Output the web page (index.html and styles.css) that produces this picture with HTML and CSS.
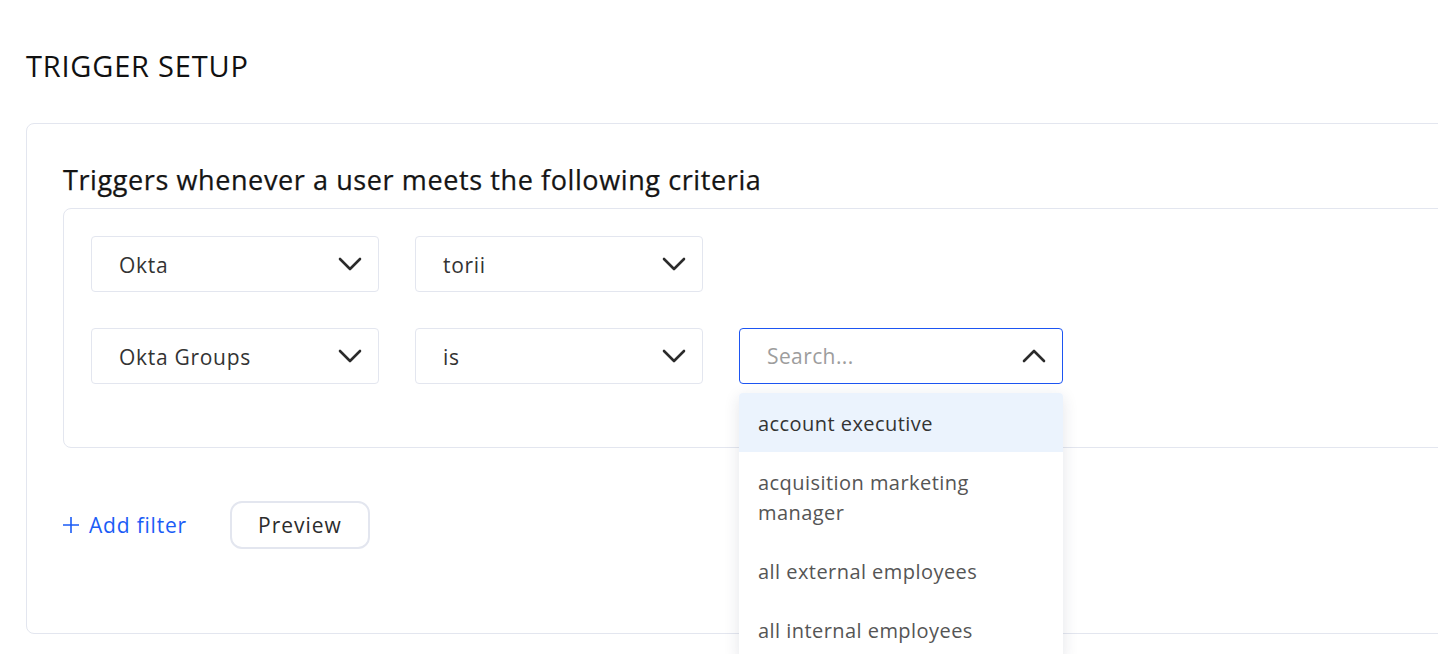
FILE: index.html
```html
<!DOCTYPE html>
<html lang="en">
<head>
<meta charset="utf-8">
<title>Trigger setup</title>
<link rel="stylesheet" href="styles.css">
</head>
<body>
<main class="page">
  <h1 class="page-title">TRIGGER SETUP</h1>
  <section class="card">
    <h2 class="card-title">Triggers whenever a user meets the following criteria</h2>
    <div class="criteria">
      <div class="row">
        <div class="select"><span class="value">Okta</span>
          <svg class="chev" viewBox="0 0 24 14" width="24" height="14"><path d="M2 2l10 10L22 2" /></svg>
        </div>
        <div class="select"><span class="value">torii</span>
          <svg class="chev" viewBox="0 0 24 14" width="24" height="14"><path d="M2 2l10 10L22 2" /></svg>
        </div>
      </div>
      <div class="row">
        <div class="select"><span class="value">Okta Groups</span>
          <svg class="chev" viewBox="0 0 24 14" width="24" height="14"><path d="M2 2l10 10L22 2" /></svg>
        </div>
        <div class="select"><span class="value">is</span>
          <svg class="chev" viewBox="0 0 24 14" width="24" height="14"><path d="M2 2l10 10L22 2" /></svg>
        </div>
        <div class="combo">
          <div class="select select-open"><span class="placeholder">Search...</span>
            <svg class="chev" viewBox="0 0 24 14" width="24" height="14"><path d="M2 12L12 2l10 10" /></svg>
          </div>
          <ul class="menu">
            <li class="menu-item active">account executive</li>
            <li class="menu-item">acquisition marketing manager</li>
            <li class="menu-item">all external employees</li>
            <li class="menu-item">all internal employees</li>
          </ul>
        </div>
      </div>
    </div>
    <div class="actions">
      <a class="add-filter" href="#"><svg class="plus" viewBox="0 0 16 16" width="16" height="16"><path d="M8 0v16M0 8h16" /></svg>Add filter</a>
      <button class="btn" type="button">Preview</button>
    </div>
  </section>
</main>
</body>
</html>
```

FILE: styles.css
```css
* { box-sizing: border-box; }
html, body { margin: 0; padding: 0; background: #fff; overflow: hidden; }
body {
  font-family: "Open Sans", "Noto Sans", sans-serif;
  color: #1f1f1f;
  width: 1438px;
  height: 654px;
}
.page {
  padding: 46px 0 0 26px;
}
.page-title {
  margin: 0;
  font-size: 29px;
  font-weight: 400;
  letter-spacing: 0.8px;
  line-height: 40px;
  color: #111;
}
.card {
  margin-top: 37px;
  width: 1460px;
  height: 511px;
  border: 1px solid #e3e6ef;
  border-radius: 8px;
  padding: 38px 0 0 36px;
}
.card-title {
  margin: 0;
  font-size: 27px;
  font-weight: 500;
  line-height: 36px;
  letter-spacing: 0.6px;
  color: #141414;
  -webkit-text-stroke: 0.25px #141414;
}
.criteria {
  margin-top: 10px;
  width: 1420px;
  border: 1px solid #e3e6ef;
  border-radius: 8px;
  padding: 27px 27px 27px;
  height: 240px;
}
.row {
  display: flex;
  gap: 36px;
  margin-bottom: 36px;
}
.select {
  width: 288px;
  height: 56px;
  border: 1px solid #e3e6ef;
  border-radius: 4px;
  display: flex;
  align-items: center;
  justify-content: space-between;
  padding: 0 16px 0 27px;
  font-size: 21px;
  letter-spacing: 0.7px;
  color: #333;
  background: #fff;
}
.value { padding-top: 2px; }
.chev {
  width: 24px;
  height: 14px;
  fill: none;
  stroke: #2b2b2b;
  stroke-width: 2.6;
  stroke-linecap: round;
  stroke-linejoin: round;
}
.combo {
  position: relative;
  width: 324px;
}
.select-open {
  width: 324px;
  border-color: #1d55f2;
}
.placeholder { color: #9d9d9d; letter-spacing: 0.4px; }
.menu {
  position: absolute;
  left: 0;
  top: 65px;
  width: 324px;
  margin: 0;
  padding: 0;
  list-style: none;
  background: #fff;
  border-radius: 4px;
  box-shadow: 0 4px 16px rgba(30, 40, 70, 0.12);
  z-index: 5;
}
.menu-item {
  padding: 16px 60px 13px 19px;
  font-size: 20px;
  line-height: 30px;
  letter-spacing: 0.45px;
  color: #555;
}
.menu-item.active {
  background: #ebf3fd;
  color: #333;
  border-radius: 4px 4px 0 0;
}
.actions {
  display: flex;
  align-items: center;
  margin-top: 53px;
  gap: 43px;
}
.add-filter {
  color: #1b5cf6;
  text-decoration: none;
  font-size: 21px;
  letter-spacing: 0.8px;
  display: flex;
  align-items: center;
}
.plus {
  width: 16px;
  height: 16px;
  stroke: #1b5cf6;
  stroke-width: 1.6;
  margin-right: 10px;
}
.btn {
  font-family: inherit;
  font-size: 21px;
  letter-spacing: 1px;
  color: #2c2c2c;
  background: #fff;
  border: 2px solid #e3e6ef;
  border-radius: 12px;
  height: 48px;
  width: 140px;
  padding: 0;
}
```
